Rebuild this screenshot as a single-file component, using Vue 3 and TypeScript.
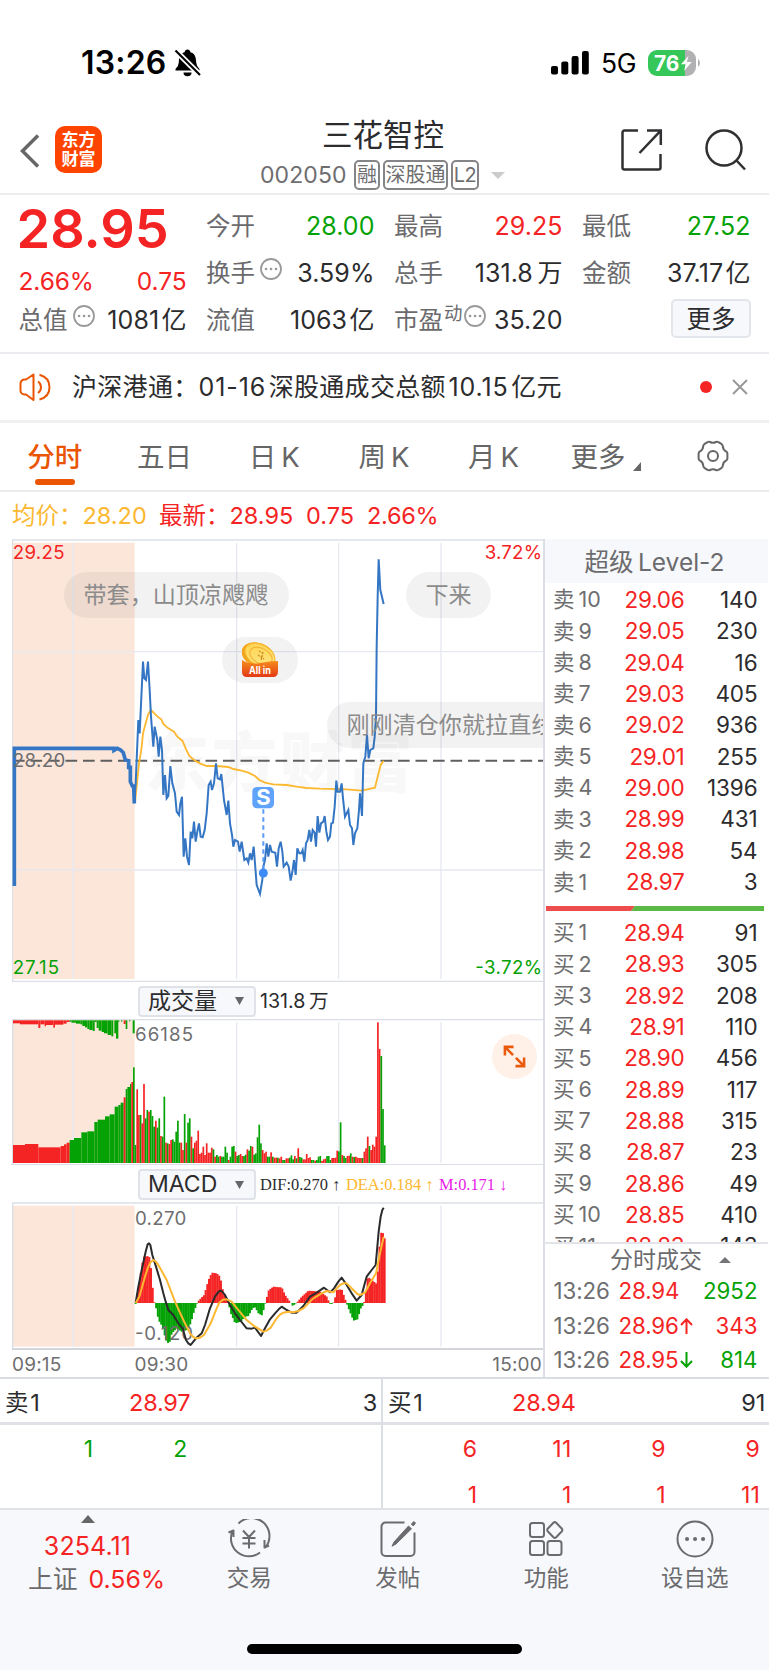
<script setup lang="ts">
type Tone = 'red' | 'green' | 'dark'
interface Quote { label: string; value: string; tone: Tone; info?: boolean; sup?: string }
interface Level { label: string; price: string; qty: string }
interface Bar { x: number; y: number; h: number; tone: string }

const quoteColumns: Quote[][] = [
  [
    { label: '今开', value: '28.00', tone: 'green' },
    { label: '换手', value: '3.59%', tone: 'dark', info: true },
    { label: '流值', value: '1063\u200a亿', tone: 'dark' },
  ],
  [
    { label: '最高', value: '29.25', tone: 'red' },
    { label: '总手', value: '131.8\u2009万', tone: 'dark' },
    { label: '市盈', value: '35.20', tone: 'dark', info: true, sup: '动' },
  ],
  [
    { label: '最低', value: '27.52', tone: 'green' },
    { label: '金额', value: '37.17\u200a亿', tone: 'dark' },
  ],
]

const level = (side: string, rows: [string, string, string][]): Level[] =>
  rows.map(([n, price, qty]) => ({ label: `${side}\u2009${n}`, price, qty }))

const asks = level('卖', [
  ['10', '29.06', '140'], ['9', '29.05', '230'], ['8', '29.04', '16'], ['7', '29.03', '405'],
  ['6', '29.02', '936'], ['5', '29.01', '255'], ['4', '29.00', '1396'], ['3', '28.99', '431'],
  ['2', '28.98', '54'], ['1', '28.97', '3'],
])
const bids = level('买', [
  ['1', '28.94', '91'], ['2', '28.93', '305'], ['3', '28.92', '208'], ['4', '28.91', '110'],
  ['5', '28.90', '456'], ['6', '28.89', '117'], ['7', '28.88', '315'], ['8', '28.87', '23'],
  ['9', '28.86', '49'], ['10', '28.85', '410'], ['11', '28.83', '143'],
])
const trades = [
  { price: '28.94', arrow: '', tone: 'red', qty: '2952', qtyTone: 'green' },
  { price: '28.96', arrow: 'up', tone: 'red', qty: '343', qtyTone: 'red' },
  { price: '28.95', arrow: 'down', tone: 'green', qty: '814', qtyTone: 'green' },
]

const askQueue = ['1', '2']
const bidQueue = ['6', '11', '9', '9', '1', '1', '1', '11']

/* Charts use three drawing units per pixel so the lines keep sub-pixel detail. */
const auction = '43,1068 43,655 342,655 342,661 352,655 362,660 370,668 376,690 386,692 386,712 391,712 391,755 397,768 401,768 403,820'
const price =
  '403,820 407,760 415,570 419,610 429,395 433,445 438,450 444,395 449,480 453,560 460,650 464,590 472,630 476,680 481,620 486,660 490,795 495,735 500,805 505,798 511,708 517,760 525,790 530,845 537,855 541,820 546,800 551,980 556,925 561,980 567,1005 572,905 577,925 582,875 587,935 592,905 597,880 602,920 608,922 614,900 620,850 626,765 632,755 636,780 642,760 648,700 653,745 660,748 664,732 672,810 680,855 685,812 690,880 696,915 700,950 705,930 714,935 719,965 725,935 733,990 740,985 745,998 750,970 755,990 761,950 765,1000 770,1065 780,1092 787,1050 790,1010 795,990 800,940 805,980 810,945 815,965 826,968 831,1010 836,955 842,935 847,965 851,1010 860,998 866,1010 872,1052 878,1020 882,990 887,1035 892,955 898,970 904,970 908,960 913,995 918,940 923,930 928,900 933,935 938,900 944,908 948,950 953,858 958,908 963,880 970,875 974,858 979,905 984,930 990,920 994,880 999,878 1004,830 1009,752 1013,785 1020,785 1025,760 1029,805 1035,860 1045,840 1050,885 1056,895 1060,945 1065,910 1072,895 1077,840 1080,790 1086,858 1090,700 1096,680 1101,615 1106,685 1111,660 1120,655 1124,620 1128,560 1130,350 1133,200 1136,88 1141,180 1151,222'
const average =
  '405,818 410,770 417,700 424,660 429,610 437,580 445,552 453,540 463,550 475,562 484,568 490,582 505,595 522,605 532,620 547,632 557,655 568,678 585,692 600,700 620,708 650,708 685,711 700,717 725,722 745,728 765,738 778,750 795,758 820,763 860,765 890,770 920,774 960,776 1040,778 1085,782 1125,773 1133,740 1142,705 1151,692'
const dif =
  '407,968 415,920 425,870 437,815 443,793 447,790 451,795 457,825 468,860 480,900 490,940 497,965 505,990 520,1005 535,1030 548,1045 558,1080 565,1090 572,1095 580,1085 588,1075 605,1060 615,1035 630,985 645,950 656,935 662,932 668,936 675,945 690,975 705,1000 720,1020 740,1045 755,1046 765,1043 783,1068 795,1045 810,1018 825,1000 836,988 845,980 860,990 875,998 890,998 910,978 930,950 950,938 972,923 990,937 1002,925 1015,905 1025,893 1040,915 1055,940 1070,962 1085,945 1093,915 1100,890 1115,870 1127,855 1132,800 1136,755 1142,710 1147,690 1151,683'
const dea =
  '407,969 418,950 435,890 444,862 452,846 460,840 467,844 478,860 500,900 525,965 550,1020 570,1060 580,1071 588,1075 600,1073 612,1065 632,1030 650,985 658,968 668,959 680,958 695,965 715,990 740,1020 765,1040 790,1055 800,1052 812,1043 830,1015 840,1004 850,998 865,995 880,997 895,993 910,985 940,955 965,940 980,933 1000,937 1010,925 1020,915 1030,910 1040,910 1060,930 1072,942 1080,945 1095,938 1110,910 1128,880 1140,820 1151,770'

const VOLUME_BASE = 549
const PITCH = 5.116
const RED = '#f52424'
const GREEN = '#05a205'

const volumeTops =
  '495g 328r 405r 405g 430r 312r 415g 390g 395r 390g 408g 440g 422r 443g 415g 468r 470g 350g 488r 490g 492r 480r 478g 485g 455g 422g 488g 488r 510r 402g 488r 428g 415g 470r 505g 488r 482r 452r 522r 518r 500r 525r 490r 518r 518r 503r 508g 530r 525g 530g 528r 530g 530g 500g 518g 540r 530g 500g 498g 515r 528g 525g 522r 528r 528g 524g 508r 512g 498g 500r 524g 520g 472g 434g 490g 510r 520r 515r 530g 530g 517r 530g 533r 533r 533g 535r 530r 540g 540g 535r 535r 533g 526g 538g 528r 535g 505r 531g 533g 538r 538r 522r 534r 532r 540g 540g 542r 540g 530g 528g 543r 538r 536r 528g 528g 540g 534r 534r 533r 512r 514g 427g 525r 528g 534g 528r 527r 520g 530r 531g 530r 533r 534r 534r 534g 515r 505r 470r 498g 510r 494r 500r 470r 127r 207r 228g 387g 496g'.split(' ')

const colour = (code: string): string => (code === 'r' ? RED : GREEN)

const volumeBars: Bar[] = volumeTops.map((item, i) => {
  const top = parseInt(item, 10)
  const x = 404 + (i * (1156.5 - 404 - 5)) / (volumeTops.length - 1)
  return { x, y: top, h: VOLUME_BASE - top, tone: colour(item.slice(-1)) }
})

function sample(points: number[][], x: number): number {
  for (let i = 1; i < points.length; i++) {
    const [x0, y0] = points[i - 1]
    const [x1, y1] = points[i]
    if (x <= x1) return y0 + ((y1 - y0) * (x - x0)) / (x1 - x0)
  }
  return points[points.length - 1][1]
}

/* Opening auction: each step is [right edge, top, colour]. */
const auctionSteps: [number, number, string][] = [
  [75, 495, 'r'], [115, 492, 'r'], [182, 502, 'r'], [192, 498, 'r'], [200, 493, 'r'], [209, 488, 'r'],
  [222, 480, 'g'], [244, 474, 'g'], [262, 457, 'g'], [283, 454, 'g'], [293, 426, 'g'], [315, 419, 'g'],
  [329, 409, 'g'], [344, 403, 'g'], [355, 380, 'g'], [362, 375, 'g'], [371, 368, 'g'], [377, 352, 'r'],
  [382, 327, 'g'], [390, 321, 'g'], [394, 312, 'g'], [399, 306, 'r'], [404, 262, 'g'],
]
const auctionBars = auctionSteps.map(([right, top, code], i) => {
  const left = i ? auctionSteps[i - 1][0] : 39
  return { x: left, w: right - left, y: top, h: VOLUME_BASE - top, tone: colour(code) }
})

/* Unmatched auction volume hanging from the top edge: [left, right, bottom, colour]. */
const hanging: [number, number, number, string][] = [
  [39, 60, 130, 'r'], [60, 115, 133, 'r'], [115, 121, 144, 'r'], [121, 134, 133, 'r'], [134, 138, 139, 'r'],
  [138, 160, 135, 'r'], [160, 165, 143, 'r'], [165, 190, 134, 'r'], [190, 200, 131, 'r'], [200, 209, 126, 'r'],
  [209, 214, 125, 'g'], [214, 228, 128, 'g'], [228, 241, 131, 'g'], [241, 247, 133, 'g'], [247, 255, 138, 'g'],
  [255, 262, 142, 'g'], [262, 268, 147, 'g'], [268, 278, 150, 'g'], [278, 284, 153, 'g'], [284, 290, 126, 'g'],
  [290, 296, 144, 'g'], [296, 305, 152, 'g'], [305, 312, 156, 'g'], [312, 323, 160, 'g'], [323, 334, 165, 'g'],
  [334, 340, 169, 'g'], [343, 348, 160, 'g'], [348, 355, 176, 'g'], [355, 358, 126, 'g'], [363, 367, 125, 'g'],
  [371, 377, 132, 'r'], [377, 382, 147, 'g'], [387, 391, 124, 'g'], [398, 404, 160, 'g'],
]

const envelope =
  '407,969 415,920 420,890 430,830 447,828 455,880 460,960 466,975 475,1020 487,1040 497,1080 507,1093 515,1060 530,1045 545,1055 560,1050 572,1030 580,1000 590,972 597,960 612,945 625,900 635,878 650,880 660,890 668,930 680,960 685,969 692,1000 705,1030 722,1025 735,1010 745,1008 757,985 765,982 775,1000 785,1006 792,985 798,960 806,930 820,920 838,922 845,922 855,945 870,966 878,978 890,968 905,950 925,932 960,935 980,950 988,969 992,974 1002,966 1010,930 1025,928 1036,960 1045,985 1060,1022 1072,1018 1082,985 1091,972 1095,950 1103,890 1115,900 1130,912 1135,850 1140,770 1145,752 1151,765 1156,785'
    .split(' ')
    .map((p) => p.split(',').map(Number))

const macdBars: Bar[] = Array.from({ length: 147 }, (_, i) => {
  const x = 404 + i * PITCH
  const y = sample(envelope, x + PITCH / 2)
  return { x, y: Math.min(y, 969), h: Math.abs(y - 969), tone: y < 969 ? RED : GREEN }
})
</script>

<template>
  <div class="screen">
    <header class="status">
      <div class="clock">
        <b>13:26</b>
        <svg class="bell" viewBox="0 0 27 28">
          <path d="M1.500 21.500V20q3-2.500 3.300-6.500C5 7 6.800 4.200 10.500 3.200 11 1.300 12 .5 13.500.5s2.500.8 3 2.700c3.700 1 5.500 3.800 5.700 10.300q.3 4 3.300 6.500v1.500z" />
          <path d="M9.500 23.500h8a4 3.800 0 0 1-8 0z" />
          <path class="slash-gap" d="M1.500 1.500 26 26" />
          <path class="slash" d="M1.500 1.500 26 26" />
        </svg>
      </div>
      <div class="radio">
        <svg class="signal" viewBox="0 0 38 24">
          <rect x="0" y="15" width="7" height="8.500" rx="2" />
          <rect x="10.300" y="10.500" width="7" height="13" rx="2" />
          <rect x="20.600" y="5" width="7" height="18.500" rx="2" />
          <rect x="31" y="0" width="6.800" height="23.500" rx="2" />
        </svg>
        <span class="net">5G</span>
        <svg class="battery" viewBox="0 0 54 26">
          <path d="M9 0h28v26H9a9 9 0 0 1-9-9V9a9 9 0 0 1 9-9z" fill="#35c759" />
          <path d="M37 0h2a9 9 0 0 1 9 9v8a9 9 0 0 1-9 9h-2z" fill="#b1b1b3" />
          <path d="M50 9q2 1.300 2 4t-2 4z" fill="#b1b1b3" />
          <text x="6" y="20.600" textLength="25.500" lengthAdjust="spacingAndGlyphs">76</text>
          <path d="M40.500 6 33 14.300h4.800L36 21l7.800-9h-5z" fill="#fff" />
        </svg>
      </div>
    </header>

    <section class="title-bar">
      <svg class="back" viewBox="0 0 20 34"><path d="M18 1.500 2.500 17 18 32.500" /></svg>
      <div class="brand"><span>东方</span><span>财富</span></div>
      <div class="title">
        <h1>三花智控</h1>
        <div class="code-row">
          <span class="code">002050</span>
          <i class="tag t1">融</i><i class="tag t2">深股通</i><i class="tag t3">L2</i>
          <svg class="caret" viewBox="0 0 14 7"><path d="M0 0h14L7 7z" /></svg>
        </div>
      </div>
      <svg class="share" viewBox="0 0 42 42">
        <path d="M17 1.500H3.500a2 2 0 0 0-2 2v35a2 2 0 0 0 2 2h34a2 2 0 0 0 2-2V25M26 1.500h13.800V16M39.500 1.800 18.500 24" />
      </svg>
      <svg class="search" viewBox="0 0 42 42"><circle cx="19" cy="19" r="17.500" /><path d="M31.500 31.500 40 40.500" /></svg>
    </section>

    <section class="quotes">
      <div class="last">
        <strong>28.95</strong>
        <div class="change"><span>2.66%</span><span>0.75</span></div>
        <div class="cell cap">
          <span class="label">总值</span>
          <svg class="info" viewBox="0 0 24 24"><circle cx="12" cy="12" r="10" /><path d="M7 12h.1M12 12h.1M17 12h.1" /></svg>
          <span class="value dark">1081&#8202;亿</span>
        </div>
      </div>
      <div v-for="(col, c) in quoteColumns" :key="c" class="quote-col">
        <div v-for="q in col" :key="q.label" class="cell">
          <span class="label">{{ q.label }}</span>
          <span v-if="q.sup" class="sup">{{ q.sup }}</span>
          <svg v-if="q.info" class="info" viewBox="0 0 24 24"><circle cx="12" cy="12" r="10" /><path d="M7 12h.1M12 12h.1M17 12h.1" /></svg>
          <span class="value" :class="q.tone">{{ q.value }}</span>
        </div>
        <button v-if="col.length === 2" class="more">更多</button>
      </div>
    </section>

    <section class="news">
      <svg class="speaker" viewBox="0 0 34 28">
        <path d="M7 6.500H5.500a4 4 0 0 0-4 4v7a4 4 0 0 0 4 4H7L14.500 27V1.500zM19 8.500q3 2 3 5.700T19 20M20.500 1.800q10 2.800 10 12.400t-10 12.300" />
      </svg>
      <span class="headline">沪深港通：<b>01-16</b>&#8202;深股通成交总额&#8202;<b>10.15</b>&#8202;亿元</span>
      <i class="dot" />
      <svg class="close" viewBox="0 0 16 16"><path d="M1 1 15 15M15 1 1 15" /></svg>
    </section>

    <nav class="tabs">
      <span class="tab active">分时</span>
      <span class="tab">五日</span>
      <span class="tab">日&#8201;K</span>
      <span class="tab">周&#8201;K</span>
      <span class="tab">月&#8201;K</span>
      <span class="tab more-tab">更多<svg viewBox="0 0 8 9"><path d="M8 0v9H0z" /></svg></span>
      <svg class="gear" viewBox="0 0 34 32">
        <path d="M11.500 2.200q1.300-.9 2.600-.2 2.900 1.600 5.800 0 1.300-.7 2.600.2l3.200 2q1.100.8 1.100 2.200.2 3.300 3.200 4.900 1.400.8 1.400 2.300v4.800q0 1.500-1.400 2.300-3 1.600-3.200 4.900 0 1.400-1.100 2.200l-3.200 2q-1.300.9-2.600.2-2.900-1.600-5.800 0-1.300.7-2.600-.2l-3.200-2q-1.100-.8-1.100-2.200-.2-3.300-3.200-4.900-1.400-.8-1.400-2.300v-4.800q0-1.500 1.400-2.300 3-1.600 3.200-4.900 0-1.400 1.100-2.200z" />
        <circle cx="17" cy="16" r="5" />
      </svg>
    </nav>

    <section class="summary">
      <span class="avg">均价：28.20</span>
      <span class="now">最新：28.95</span><span class="now n2">0.75</span><span class="now n3">2.66%</span>
    </section>

    <main class="board">
      <div class="charts">
        <div class="price-chart">
          <svg viewBox="33 27 1596 1329">
            <g class="frame"><path d="M36 30H1638M38 30V1353M36 1354H1638" /></g>
            <rect x="39" y="38" width="365" height="1309" class="band" />
            <g class="grid"><path d="M219 38V1347M710 38V1347M1016 38V1347M1323 38V1347M39 365H1630M39 1020H1630" /></g>
            <text class="watermark" x="432" y="768" textLength="806">东方财富</text>
            <path class="mid" d="M39 692H1630" />
            <polyline class="avg-line" :points="average" />
            <polyline class="auction-line" :points="auction" />
            <polyline class="price-line" :points="price" />
            <path class="mark-stem" d="M790 838V1020" />
            <circle cx="790" cy="1029" r="13.500" class="mark-dot" />
            <rect x="757" y="771" width="65" height="64" rx="14" class="mark-box" />
            <text class="mark-text" x="790" y="825">S</text>
            <text class="axis up" x="38" y="88" textLength="156">29.25</text>
            <text class="axis" x="38" y="711" textLength="158">28.20</text>
            <text class="axis down" x="38" y="1331" textLength="139">27.15</text>
            <text class="axis up" x="1454" y="88" textLength="172">3.72%</text>
            <text class="axis down" x="1426" y="1331" textLength="200">-3.72%</text>
          </svg>
          <div class="bubble b1">带套，山顶凉飕飕</div>
          <div class="bubble b2">下来</div>
          <div class="bubble b3">
            <svg viewBox="0 0 36 36">
              <defs>
                <linearGradient id="bag" x1="0" y1="0" x2="0" y2="1"><stop offset="0" stop-color="#f7901e" /><stop offset="1" stop-color="#e23a14" /></linearGradient>
                <linearGradient id="coin" x1="0" y1="0" x2="1" y2="1"><stop offset="0" stop-color="#ffd04a" /><stop offset="1" stop-color="#ffe98a" /></linearGradient>
              </defs>
              <ellipse cx="16" cy="13" rx="17" ry="12" transform="rotate(22 16 13)" fill="#f2a51d" />
              <ellipse cx="18" cy="13" rx="16" ry="10.500" transform="rotate(28 18 13)" fill="url(#coin)" stroke="#f7b52c" />
              <ellipse cx="19" cy="14" rx="12" ry="7.500" transform="rotate(28 19 14)" fill="none" stroke="#f0b030" />
              <path d="M17 9l5 3M16 13l6 4M21 10l-2 9" stroke="#d09020" stroke-width="1.300" stroke-dasharray="2 1" />
              <path d="M0 18q8 5 18 3t18-2v10q0 6-5 6H5q-5 0-5-5z" fill="url(#bag)" />
              <text x="18" y="31.500" textLength="22" lengthAdjust="spacingAndGlyphs">All in</text>
            </svg>
          </div>
          <div class="bubble b4">刚刚清仓你就拉直线</div>
        </div>

        <div class="picker-row">
          <span class="picker">成交量<svg viewBox="0 0 9 8"><path d="M0 0h9L4.500 8z" /></svg></span>
          <span class="picker-value">131.8&#8201;万</span>
        </div>

        <div class="volume-chart">
          <svg viewBox="33 117 1596 438">
            <rect x="39" y="120" width="365" height="429" class="band" />
            <g class="frame"><path d="M36 119H1638M38 119V555" /></g>
            <g class="grid"><path d="M219 126V550M710 126V550M1016 126V550M1323 126V550" /></g>
            <rect v-for="(b, i) in auctionBars" :key="'a' + i" :x="b.x" :y="b.y" :width="b.w" :height="b.h" :fill="b.tone" />
            <rect v-for="(b, i) in hanging" :key="'h' + i" :x="b[0]" y="121" :width="b[1] - b[0]" :height="b[2] - 121" :fill="colour(b[3])" />
            <rect v-for="(b, i) in volumeBars" :key="'v' + i" :x="b.x" :y="b.y" width="5.100" :height="b.h" :fill="b.tone" />
            <text class="axis" x="405" y="183" textLength="174">66185</text>
          </svg>
          <div class="expand">
            <svg viewBox="0 0 24 24"><path d="M2 11V2h9M2.500 2.500l8 8M22 13v9h-9M21.500 21.500l-8-8" /></svg>
          </div>
        </div>

        <div class="picker-row second">
          <span class="picker">MACD<svg viewBox="0 0 9 8"><path d="M0 0h9L4.500 8z" /></svg></span>
          <span class="legend">
            <span class="l1">DIF:0.270 <i>↑</i></span><span class="l2">DEA:0.184 <i>↑</i></span><span class="l3">M:0.171 <i>↓</i></span>
          </span>
        </div>

        <div class="macd-chart">
          <svg viewBox="33 666 1596 444">
            <rect x="39" y="677" width="365" height="423" class="band" />
            <g class="frame"><path d="M36 669H1638M38 669V1108" /><path class="thick" d="M36 1107H1638" /></g>
            <g class="grid"><path d="M219 677V1100M710 677V1100M1016 677V1100M1323 677V1100" /></g>
            <text class="axis" x="405" y="734" textLength="154">0.270</text>
            <rect v-for="(b, i) in macdBars" :key="i" :x="b.x" :y="b.y" width="6" :height="b.h" :fill="b.tone" />
            <text class="axis" x="405" y="1081" textLength="174">-0.120</text>
            <polyline class="dif" :points="dif" />
            <polyline class="dea" :points="dea" />
          </svg>
        </div>

        <div class="times"><span>09:15</span><span class="open">09:30</span><span class="end">15:00</span></div>
      </div>

      <aside class="book">
        <div class="book-head">超级&#8201;Level-2</div>
        <div class="levels">
          <div v-for="l in asks" :key="l.label" class="level">
            <span class="side">{{ l.label }}</span><span class="price">{{ l.price }}</span><span class="qty">{{ l.qty }}</span>
          </div>
          <div class="ratio"><svg viewBox="0 0 218 5" preserveAspectRatio="none"><path d="M0 0h89l-4 5H0z" fill="#ee4d4d" /><path d="M89 0h129v5H85z" fill="#5bba45" /></svg></div>
          <div v-for="l in bids" :key="l.label" class="level">
            <span class="side">{{ l.label }}</span><span class="price">{{ l.price }}</span><span class="qty">{{ l.qty }}</span>
          </div>
        </div>
        <div class="trades">
          <div class="trades-head">分时成交<svg viewBox="0 0 12 6"><path d="M0 6 6 0l6 6z" /></svg></div>
          <div v-for="(t, i) in trades" :key="i" class="trade">
            <span class="time">13:26</span>
            <span class="deal red">{{ t.price }}<svg v-if="t.arrow" :class="[t.arrow, t.tone]" viewBox="0 0 13 16"><path d="M6.500 16V1.500M1 7l5.500-5.700L12 7" /></svg></span>
            <span class="amount" :class="t.qtyTone">{{ t.qty }}</span>
          </div>
        </div>
      </aside>
    </main>

    <section class="depth">
      <div class="half">
        <div class="depth-head"><span>卖&#8202;1</span><span class="depth-price">28.97</span><span>3</span></div>
        <div class="queue asks"><span v-for="(n, i) in askQueue" :key="i" class="green">{{ n }}</span></div>
      </div>
      <div class="half right">
        <div class="depth-head"><span>买&#8202;1</span><span class="depth-price">28.94</span><span>91</span></div>
        <div class="queue"><span v-for="(n, i) in bidQueue" :key="i" class="red">{{ n }}</span></div>
      </div>
    </section>

    <footer class="dock">
      <div class="dock-row">
        <div class="index">
          <svg viewBox="0 0 14 8"><path d="M0 8 7 0l7 8z" /></svg>
          <span class="points">3254.11</span>
          <span class="pct"><em>上证</em>0.56%</span>
        </div>
        <div class="item">
          <svg viewBox="0 0 44 40"><path d="M11.500 4.500A18 18 0 0 1 38.300 28.500M42 26.500l-4.500 2V21M33 33.500A18 18 0 0 1 5.500 12M1.500 13.500l5-2V18M16 11.500l6 6.500 6-6.500M22 18v11.500M15.500 19h13M15.500 24.500h13" /></svg>
          <span>交易</span>
        </div>
        <div class="item">
          <svg viewBox="0 0 44 40"><path d="M28.500 3.500H9.500a4 4 0 0 0-4 4v25.500a4 4 0 0 0 4 4h25a4 4 0 0 0 4-4V13.500" /><path d="m32.500 7 3 2.800-15.500 15.200-4 2.200 2-4.200zM35.300 5l2.700-2.500L39.500 4 37.300 7z" class="solid" /></svg>
          <span>发帖</span>
        </div>
        <div class="item">
          <svg viewBox="0 0 44 40"><rect x="6" y="4" width="14" height="14" rx="2.500" /><rect x="6" y="22" width="14" height="14" rx="2.500" /><rect x="23.500" y="22" width="14" height="14" rx="2.500" /><path d="M29.400 3.800q1.400-1.300 2.800 0l5.500 5.700q1.300 1.500 0 3l-5.500 5.700q-1.400 1.300-2.800 0l-5.500-5.700q-1.300-1.500 0-3z" /></svg>
          <span>功能</span>
        </div>
        <div class="item">
          <svg viewBox="0 0 44 40"><circle cx="22" cy="20" r="17.500" /><path class="dots" d="M14 20h.1M22 20h.1M30 20h.1" /></svg>
          <span>设自选</span>
        </div>
      </div>
      <div class="home" />
    </footer>
  </div>
</template>

<style>
body { background: #fff; }
</style>

<style scoped>
* { box-sizing: border-box; }
.screen {
  width: 769px; height: 1670px; overflow: hidden; background: #fff; color: #2c2c2e;
  font-family: Inter, 'Noto Sans CJK SC', sans-serif; font-size: 24px; line-height: 1;
}
svg { display: block; flex: none; }
i, em { font-style: normal; }
.red { color: #f52424; }
.green { color: #05a205; }
.dark { color: #2c2c2e; }

.status { height: 115px; padding: 47px 67px 0 81px; display: flex; justify-content: space-between; color: #000; }
.clock { display: flex; height: 31px; align-items: center; gap: 7px; }
.clock b { font-size: 32px; font-weight: 600; letter-spacing: .2px; width: 86px; }
.bell { width: 27px; height: 28px; }
.slash { stroke: #000; stroke-width: 2.200; }
.slash-gap { stroke: #fff; stroke-width: 5.500; }
.radio { display: flex; height: 31px; align-items: center; }
.signal { width: 38px; height: 24px; margin-right: 12px; }
.net { font-size: 26.500px; width: 47px; letter-spacing: -.4px; padding-top: 1px; }
.battery { width: 54px; height: 26px; }
.battery text { font-size: 21px; font-weight: 700; fill: #fff; }

.title-bar { height: 80px; display: flex; border-bottom: 2px solid #ececee; }
.back { width: 20px; height: 34px; margin: 19px 0 0 20px; fill: none; stroke: #666; stroke-width: 3.500; }
.brand {
  width: 47px; height: 47px; margin: 11px 0 0 15px; border-radius: 10px; background: #ff4400; color: #fff;
  display: flex; flex-direction: column; align-items: center; justify-content: center; gap: 2px;
  font-size: 17px; font-weight: 700;
}
.title { margin-left: 158px; width: 250px; }
.title h1 { margin: 4px 0 0 62px; font-size: 30.500px; line-height: 32px; font-weight: 400; }
.code-row { display: flex; align-items: center; height: 30px; margin-top: 9px; color: #6e6e70; }
.code { font-size: 23px; width: 94px; letter-spacing: .1px; }
.tag { height: 30px; border: 2px solid #858587; border-radius: 5px; font-size: 20px; line-height: 27px; text-align: center; }
.t1 { width: 26px; margin-right: 3px; }
.t2 { width: 65px; margin-right: 3px; }
.t3 { width: 28px; letter-spacing: -.5px; }
.caret { width: 14px; height: 7px; margin-left: 12px; fill: #ccc; }
.share { width: 42px; height: 42px; margin: 14px 0 0 111px; fill: none; stroke: #303033; stroke-width: 2.500; }
.search { width: 42px; height: 42px; margin: 14px 0 0 42px; fill: none; stroke: #303033; stroke-width: 2.500; }

.quotes { height: 159px; padding-left: 18.500px; display: flex; gap: 19.500px; border-bottom: 2px solid #ececf0; }
.last { width: 168px; color: #f52424; }
.last strong { display: block; margin: 7px 0 0 -2px; font-size: 54px; line-height: 54px; font-weight: 600; letter-spacing: 0; white-space: nowrap; }
.change { display: flex; justify-content: space-between; margin-top: 11px; line-height: 28px; font-size: 24.500px; letter-spacing: -.1px; }
.quote-col { width: 168.500px; padding-top: 8px; }
.cell { height: 47px; display: flex; align-items: center; white-space: nowrap; }
.cap { margin-top: 2px; }
.label { color: #6b6b6e; font-size: 24.500px; }
.info { width: 24px; height: 24px; margin: -9px 0 0 4px; fill: none; stroke: #9a9a9d; stroke-width: 1.800; stroke-linecap: round; }
.info path { stroke-width: 2.600; }
.sup { font-size: 18.500px; color: #6b6b6e; margin: -15px 0 0 1px; }
.sup + .info { margin-left: 0; }
.value { margin-left: auto; font-size: 25px; letter-spacing: .05px; }
.more {
  display: block; width: 80px; height: 39px; margin: 2px 0 0 89px; padding: 1px 0 0; border: 2px solid #e2e5ea; border-radius: 5px;
  background: #f7f8fb; color: #2c2c2e; font: inherit; font-size: 24.500px;
}

.news { height: 69px; display: flex; align-items: center; padding: 0 20px 0 19px; border-bottom: 3px solid #f0f0f1; }
.speaker { width: 34px; height: 28px; fill: none; stroke: #ea5504; stroke-width: 2; stroke-linejoin: round; }
.headline { margin-left: 19px; font-size: 25px; letter-spacing: .3px; white-space: nowrap; }
.headline b { font-weight: 400; letter-spacing: .9px; }
.dot { width: 12px; height: 12px; border-radius: 50%; background: #f52424; margin-left: auto; }
.close { width: 16px; height: 16px; margin-left: 20px; margin-right: 1px; fill: none; stroke: #999; stroke-width: 2; }

.tabs { height: 69px; display: flex; border-bottom: 2px solid #ececee; font-size: 27.500px; color: #666; line-height: 69px; }
.tab { position: relative; width: 109.700px; text-align: center; white-space: nowrap; }
.tab.active { color: #ea5504; font-weight: 500; }
.tab.active::after { content: ''; position: absolute; left: 35px; bottom: 5px; width: 40px; height: 6px; border-radius: 3px; background: #ea5504; }
.more-tab { display: flex; justify-content: center; width: 121px; margin-left: -3px; }
.more-tab svg { width: 8px; height: 9px; margin: 39px 0 0 8px; fill: #666; }
.gear { width: 34px; height: 32px; margin: 17px 0 0 30px; fill: none; stroke: #666; stroke-width: 2; }

.summary { height: 47px; display: flex; align-items: center; padding: 1px 0 0 12px; font-size: 23.500px; white-space: nowrap; color: #f52424; }
.avg { color: #fcb830; width: 147px; }
.now { width: 147px; }
.n2 { width: 61px; }
.n3 { width: 80px; letter-spacing: -.3px; }

.board { height: 840px; display: flex; border-bottom: 2px solid #d9dce2; }
.charts { width: 545px; flex: none; padding-left: 11px; border-right: 2px solid #dcdee5; }
.price-chart { position: relative; height: 443px; overflow: hidden; }
.price-chart > svg { width: 532px; height: 443px; }
.band { fill: #fce6da; }
.frame path { fill: none; stroke: #dcdfe5; stroke-width: 4; }
.frame .thick { stroke: #d3d5db; stroke-width: 6; }
.grid path { fill: none; stroke: #e6e9f0; stroke-width: 4; }
.mid { stroke: #5f5f5f; stroke-width: 6; stroke-dasharray: 35 17.500; }
.avg-line { fill: none; stroke: #fcb830; stroke-width: 5.500; }
.auction-line { fill: none; stroke: #3476c4; stroke-width: 11; }
.price-line { fill: none; stroke: #3476c4; stroke-width: 6; }
.watermark { font-size: 196px; font-weight: 900; fill: #000; opacity: .025; }
.mark-stem { stroke: #5a9cf8; stroke-width: 6; stroke-dasharray: 13 11; }
.mark-dot { fill: #3d8bf7; }
.mark-box { fill: #5fa3fb; }
.mark-text { font-size: 66px; font-weight: 700; fill: #fff; text-anchor: middle; }
.axis { font-size: 56px; fill: #6e6e70; }
.axis.up { fill: #f52424; }
.axis.down { fill: #05a205; }
.bubble {
  position: absolute; height: 46px; border-radius: 23px; background: rgba(60, 60, 60, .065); color: #8b8b8b;
  font-size: 23.100px; line-height: 47px; padding-left: 19.500px; white-space: nowrap;
}
.b1 { left: 53px; top: 33px; width: 225px; }
.b2 { left: 395px; top: 33px; width: 85px; }
.b3 { left: 211px; top: 98px; width: 76px; }
.b3 svg { width: 36px; height: 36px; margin-top: 5px; }
.b3 text { font-size: 10.500px; font-weight: 700; fill: #fff; text-anchor: middle; }
.b4 { left: 316px; top: 163px; width: 240px; }

.picker-row { height: 37px; display: flex; align-items: center; padding: 1px 0 0 127px; }
.picker-row.second { padding-top: 2px; }
.picker {
  width: 118px; height: 31px; border: 2px solid #dfe2e8; border-radius: 4px; background: #f7f8fb;
  display: flex; align-items: center; justify-content: space-between; padding: 0 10px 0 8px; font-size: 23px;
}
.picker svg { width: 9px; height: 8px; fill: #666; }
.picker-value { margin-left: 4px; font-size: 19.600px; padding-top: 1px; }
.volume-chart { height: 146px; position: relative; border-bottom: 1px solid #dcdfe5; }
.volume-chart > svg { width: 532px; height: 146px; }
.expand { position: absolute; right: 6px; top: 15px; width: 45px; height: 45px; border-radius: 50%; background: #fff0e8; display: flex; align-items: center; justify-content: center; }
.expand svg { width: 23px; height: 23px; fill: none; stroke: #ea5a0c; stroke-width: 2.700; }
.legend { font-family: 'Liberation Serif', serif; font-size: 16.400px; line-height: 18px; display: flex; margin-left: 4px; white-space: nowrap; }
.l1 { width: 86px; }
.l2 { width: 93px; color: #fcb830; }
.l3 { color: #e81be8; }
.macd-chart { height: 148px; }
.macd-chart svg { width: 532px; height: 148px; }
.dif { fill: none; stroke: #2b2b2b; stroke-width: 6; stroke-linejoin: round; }
.dea { fill: none; stroke: #fcb830; stroke-width: 6; stroke-linejoin: round; }
.times { height: 28px; display: flex; align-items: center; font-size: 19px; color: #6e6e70; padding: 1px 1px 0; letter-spacing: .2px; }
.times span { width: 122.500px; }
.times .end { margin-left: auto; text-align: right; }

.book { width: 224px; flex: none; margin-left: -1px; }
.book-head { height: 44px; margin-left: 1px; background: #f6f8fb; color: #6b6b6e; font-size: 24.500px; line-height: 47px; text-align: center; padding-right: 4px; }
.levels { height: 661px; overflow: hidden; padding: 1.500px 0 0 1px; border-bottom: 2px solid #e2e4ea; }
.level { height: 31.350px; display: flex; align-items: center; font-size: 22.500px; white-space: nowrap; }
.side { width: 65px; margin-left: 8px; color: #6e6e70; font-size: 21.500px; }
.price { width: 66.500px; text-align: right; color: #f52424; letter-spacing: -.25px; }
.qty { width: 73px; text-align: right; letter-spacing: -.1px; }
.ratio { height: 19.500px; padding: 8.500px 0 0 1px; }
.ratio svg { width: 218px; height: 5px; }
.trades-head { height: 30px; display: flex; align-items: center; padding: 2px 0 0 66px; font-size: 23px; color: #6b6b6e; }
.trades-head svg { width: 12px; height: 6px; margin-left: 17px; fill: #757578; }
.trade { height: 34.500px; display: flex; align-items: center; font-size: 22.300px; white-space: nowrap; }
.time { width: 65px; margin-left: 9.500px; color: #6e6e70; letter-spacing: -.1px; }
.deal { display: flex; align-items: center; width: 73px; letter-spacing: -.1px; }
.deal svg { width: 13px; height: 16px; margin-left: 1px; fill: none; stroke: currentColor; stroke-width: 2; }
.deal svg.down { transform: rotate(180deg); }
.amount { width: 66px; text-align: right; }

.depth { height: 129px; display: flex; }
.half { width: 381px; }
.half.right { width: 388px; border-left: 2px solid #dcdee5; }
.depth-head { height: 46px; border-bottom: 3px solid #dfe1e7; display: flex; align-items: center; padding: 5px 4px 0 5px; font-size: 23.500px; position: relative; justify-content: space-between; letter-spacing: -.2px; }
.depth-price { position: absolute; left: 129px; color: #f52424; }
.queue { display: grid; grid-template-columns: repeat(4, 94.300px); padding: 1px 0 0; }
.queue:not(.asks) { padding-left: 1px; }
.queue span { height: 46px; line-height: 46px; text-align: right; padding-right: 1px; font-size: 23px; letter-spacing: .3px; }

.dock { height: 162px; background: #f6f8fb; border-top: 2px solid #e0e2e8; }
.dock-row { display: flex; height: 134px; color: #6b6b6e; }
.index { width: 175px; display: flex; flex-direction: column; align-items: center; padding-top: 5px; color: #f52424; }
.index svg { width: 14px; height: 8px; fill: #666; }
.points { margin-top: 11px; line-height: 24px; font-size: 25px; letter-spacing: .1px; }
.pct { line-height: 26px; margin: 8px 0 0 18px; font-size: 24.800px; }
.pct em { color: #6b6b6e; margin-right: 11px; letter-spacing: 0; }
.item { width: 148.500px; display: flex; flex-direction: column; align-items: center; padding-top: 9px; font-size: 22.500px; }
.item svg { width: 44px; height: 40px; fill: none; stroke: #6b6b6e; stroke-width: 2; stroke-linejoin: round; }
.item span { margin: 8px 0 0; }
.item .solid { fill: #6b6b6e; stroke-width: 1; }
.item .dots { stroke-width: 4; stroke-linecap: round; }
.home { width: 275px; height: 10px; border-radius: 5px; background: #000; margin: 0 auto; }
</style>
